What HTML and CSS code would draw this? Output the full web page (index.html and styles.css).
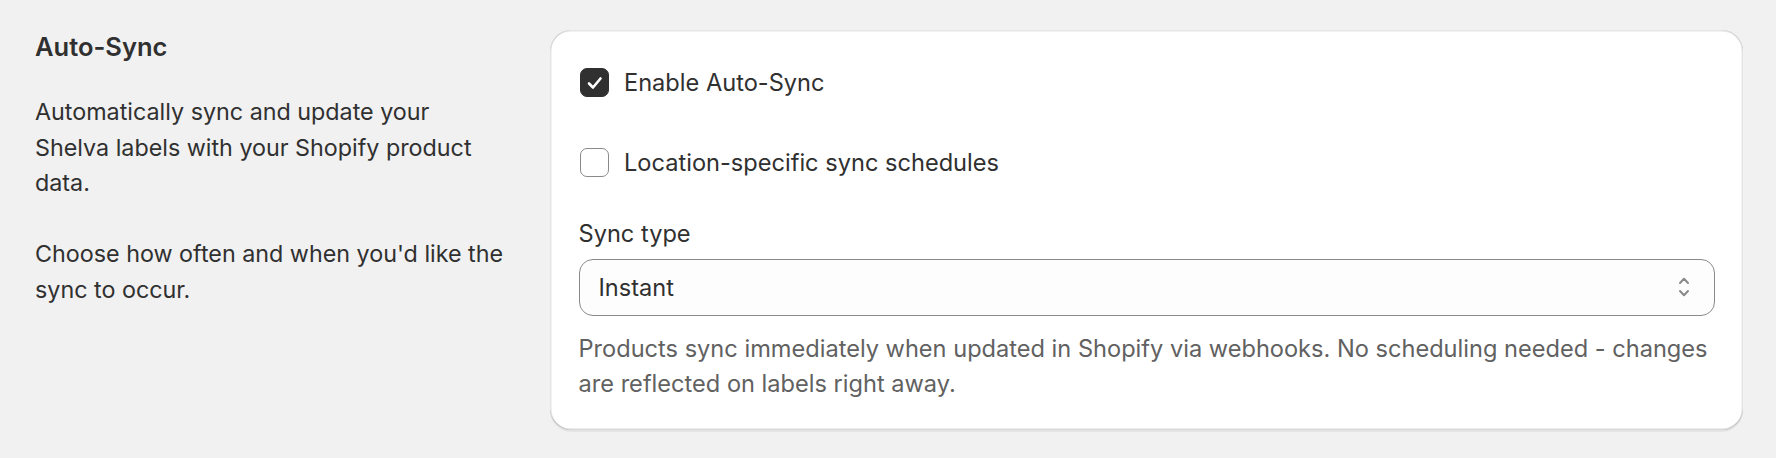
FILE: index.html
```html
<!DOCTYPE html>
<html lang="en">
<head>
<meta charset="utf-8">
<title>Auto-Sync</title>
<link rel="stylesheet" href="styles.css">
</head>
<body>
<div class="layout">
  <div class="annotation">
    <h2 class="heading">Auto-Sync</h2>
    <p class="desc">Automatically sync and update your Shelva labels with your Shopify product data.<br><br>Choose how often and when you'd like the sync to occur.</p>
  </div>
  <div class="card">
    <label class="choice first">
      <span class="box checked">
        <svg width="16" height="14" viewBox="0 0 16 14" aria-hidden="true"><polyline points="2,7.5 6,11.5 13.5,2.5" fill="none" stroke="#fff" stroke-width="2.6" stroke-linecap="round" stroke-linejoin="round"/></svg>
      </span>
      <span class="choice-label">Enable Auto-Sync</span>
    </label>
    <label class="choice second">
      <span class="box"></span>
      <span class="choice-label">Location-specific sync schedules</span>
    </label>
    <div class="field">
      <div class="field-label">Sync type</div>
      <div class="select">
        <span class="select-value">Instant</span>
        <svg class="select-icon" width="12" height="22" viewBox="0 0 12 22" aria-hidden="true"><polyline points="2,7 6,2.8 10,7" fill="none" stroke="#8a8a8a" stroke-width="2" stroke-linecap="round" stroke-linejoin="round"/><polyline points="2,15 6,19.2 10,15" fill="none" stroke="#8a8a8a" stroke-width="2" stroke-linecap="round" stroke-linejoin="round"/></svg>
      </div>
      <p class="help">Products sync immediately when updated in Shopify via webhooks. No scheduling needed - changes are reflected on labels right away.</p>
    </div>
  </div>
</div>
</body>
</html>
```
FILE: styles.css
```css
* { box-sizing: border-box; }
html, body {
  margin: 0;
  padding: 0;
  background: #f1f1f1;
}
body {
  font-family: Inter, "Noto Sans", "Liberation Sans", sans-serif;
  color: #303030;
  width: 1776px;
  height: 458px;
  overflow: hidden;
}
.layout {
  display: flex;
  align-items: flex-start;
  gap: 42px;
  padding: 29px 33px 0 35px;
}
.annotation {
  flex: 0 0 473px;
  width: 473px;
}
.heading {
  margin: 0;
  font-size: 25.5px;
  line-height: 35px;
  font-weight: 600;
}
.desc {
  margin: 30px 0 0;
  font-size: 23.3px;
  line-height: 35.5px;
  font-weight: 400;
  color: #303030;
}
.card {
  flex: 1 1 auto;
  margin-top: 1px;
  background: #fff;
  border-radius: 21px;
  padding: 35px 28.5px 29.5px;
  box-shadow:
    0 1.75px 0 0 rgba(26, 26, 26, 0.07),
    inset 1.5px 0 0 0 rgba(0, 0, 0, 0.1),
    inset -1.5px 0 0 0 rgba(0, 0, 0, 0.1),
    inset 0 -1.5px 0 0 rgba(0, 0, 0, 0.15),
    inset 0 1.5px 0 0 rgba(204, 204, 204, 0.5);
}
.choice {
  display: flex;
  align-items: center;
  height: 35px;
  font-size: 23.6px;
  line-height: 35px;
  color: #303030;
}
.choice.second {
  margin-top: 44.5px;
}
.box {
  flex: none;
  width: 29px;
  height: 29px;
  margin-left: 1.5px;
  margin-right: 15px;
  border-radius: 7px;
  border: 1.6px solid #8a8a8a;
  background: #fff;
  display: flex;
  align-items: center;
  justify-content: center;
}
.box.checked {
  background: #303030;
  border-color: #303030;
}
.box.checked svg {
  display: block;
}
.field {
  margin-top: 36px;
}
.field-label {
  font-size: 23.6px;
  line-height: 35px;
  color: #303030;
}
.select {
  margin-top: 8px;
  height: 57.5px;
  border: 1.3px solid #8a8a8a;
  border-radius: 14px;
  background: #fdfdfd;
  display: flex;
  align-items: center;
  justify-content: space-between;
  padding: 0 24px 0 19px;
}
.select-value {
  font-size: 23.6px;
  line-height: 35px;
  color: #303030;
}
.select-icon {
  display: block;
  flex: none;
}
.help {
  margin: 14.5px 0 0;
  font-size: 23.6px;
  line-height: 35px;
  color: #616161;
}
```
